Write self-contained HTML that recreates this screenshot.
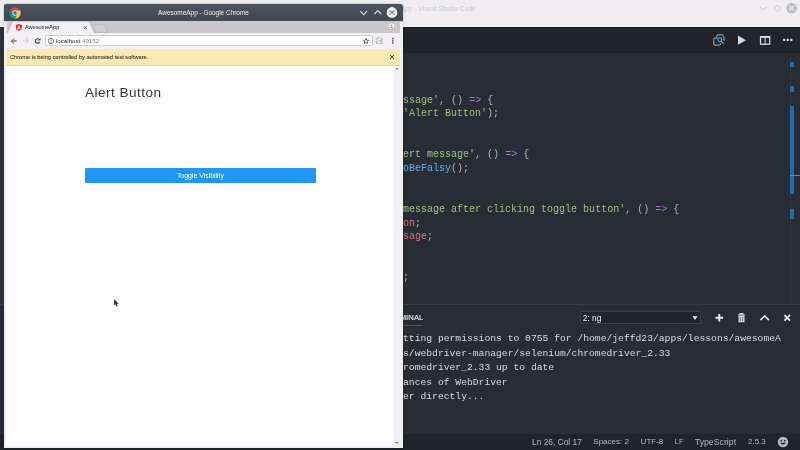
<!DOCTYPE html>
<html>
<head>
<meta charset="utf-8">
<style>
*{margin:0;padding:0;box-sizing:border-box;}
html,body{width:800px;height:450px;overflow:hidden;background:#282c35;font-family:"Liberation Sans",sans-serif;}
.abs{position:absolute;}
#root{position:relative;width:800px;height:450px;overflow:hidden;background:#282c35;will-change:transform;}
/* VS Code */
#vs-title{left:0;top:0;width:800px;height:27.200px;background:#efedf0;border-bottom:1px solid #fbfafc;}
#vs-title .t{left:400.500px;top:5.200px;font-size:6.75px;color:#c9c8cc;white-space:nowrap;}
#vs-tabs{left:0;top:27.200px;width:800px;height:25.400px;background:#21242b;border-top:1px solid #15171b;}
#vs-editor{left:0;top:52.5px;width:800px;height:253px;background:#282c35;}
#vs-left{left:0;top:27px;width:5px;height:407px;background:#2c303b;}
.code{font-family:"Liberation Mono",monospace;font-size:10px;white-space:pre;line-height:13.680px;color:#abb2bf;left:403.100px;}
.g{color:#98c379}.b{color:#61afef}.r{color:#e06c75}.p{color:#a877cf}.w{color:#abb2bf}
#vs-panel{left:0;top:304px;width:800px;height:130px;background:#282c35;border-top:1px solid #353a45;}
.term{font-family:"Liberation Mono",monospace;font-size:9.700px;white-space:pre;line-height:14.500px;color:#d7dae0;left:403px;}
#vs-status{left:0;top:433.8px;width:800px;height:17px;background:#20232a;}
.st{color:#b4b9c3;top:0;height:16px;line-height:16px;white-space:nowrap;}
/* Chrome */
#ch{left:4px;top:4px;width:399px;height:444.3px;background:#f1f0f3;border-radius:2px 3px 0 0;box-shadow:0 0 2px rgba(0,0,0,0.35);}
#ch-title{left:0;top:0;width:399px;height:16.6px;background:linear-gradient(#4d545e,#424851);border-radius:2px 3px 0 0;}
#ch-title .t{left:0;width:399px;text-align:center;top:5.2px;font-size:6.44px;color:#eceef0;}
#ch-blue{left:0;top:16.6px;width:399px;height:1px;background:#a9d4f0;}
#ch-in{left:2.3px;top:17.6px;width:394px;height:424.5px;background:#fdfcfe;overflow:hidden;}
#ch-tabs{left:0;top:0;width:394px;height:12px;background:#c9c7ca;}
#ch-tool{left:0;top:11.4px;width:394px;height:16px;background:#f2f0f3;}
#ch-info{left:0;top:27.2px;width:394px;height:17px;background:#fce8b2;border-bottom:1px solid #d3d4da;}
#ch-info .t{left:3.7px;top:5.1px;-webkit-text-stroke:0.080px #3a3425;font-size:5.66px;color:#3a3425;white-space:nowrap;}
#omni{left:38.600px;top:2.400px;width:328.300px;height:11.100px;background:#fff;border:1px solid #d2d0d4;border-radius:2px;}
</style>
</head>
<body>
<div id="root">
  <!-- VS Code background window -->
  <div id="vs-title" class="abs"><div class="t abs">App - Visual Studio Code</div>
    <svg class="abs" style="left:750px;top:0" width="50" height="18" viewBox="0 0 50 18">
      <path d="M10.100 6.900 L13.400 10.200 L16.700 6.900" fill="none" stroke="#c6c5c9" stroke-width="1"/>
      <path d="M27.500 5.100 L30.800 8.400 L27.500 11.700 L24.200 8.400 Z" fill="none" stroke="#c6c5c9" stroke-width="1"/>
      <circle cx="41.600" cy="8.200" r="5.300" fill="#bfbec2"/>
      <path d="M39.300 5.900 L43.900 10.500 M43.900 5.900 L39.300 10.500" stroke="#efedf0" stroke-width="1.100"/>
    </svg>
  </div>
  <div id="vs-tabs" class="abs">
    <svg class="abs" style="left:710px;top:4.900px" width="85" height="16" viewBox="0 0 85 16">
      <path d="M7.200 5 H4.600 Q3.900 5 3.900 5.700 V11.400 Q3.900 12.100 4.600 12.100 H9.700 Q10.400 12.100 10.400 11.400 V10.200" fill="none" stroke="#b9bdc5" stroke-width="0.950"/>
      <path d="M6.900 4.600 V2.500 Q6.900 1.800 7.600 1.800 H12.200 L14 3.600 V7.600" fill="none" stroke="#b9bdc5" stroke-width="0.950"/>
      <circle cx="9.800" cy="6.800" r="1.900" fill="none" stroke="#5aa7e6" stroke-width="1.100"/>
      <path d="M11.200 8.300 L13.700 10.900" stroke="#5aa7e6" stroke-width="1.300"/>
      <path d="M28 2.600 L36 7.200 L28 11.800 Z" fill="#d6d9de"/>
      <rect x="50.500" y="3.700" width="9.200" height="7.500" fill="none" stroke="#dfe1e6" stroke-width="1.200"/>
      <path d="M50.500 4 H59.700" stroke="#dfe1e6" stroke-width="1.600"/>
      <path d="M55.100 3.700 V11.200" stroke="#dfe1e6" stroke-width="1"/>
      <rect x="73.100" y="5.800" width="2.200" height="2.200" rx="0.600" fill="#e4e6ea"/><rect x="76.700" y="5.800" width="2.200" height="2.200" rx="0.600" fill="#e4e6ea"/><rect x="80.300" y="5.800" width="2.200" height="2.200" rx="0.600" fill="#e4e6ea"/>
    </svg>
  </div>
  <div id="vs-editor" class="abs">
    <div class="abs" style="left:789.800px;top:0;width:1px;height:253px;background:#30353f"></div>
    <div class="abs" style="left:790.200px;top:9.200px;width:3.600px;height:5.300px;background:#1d6cab"></div>
    <div class="abs" style="left:790.200px;top:33.700px;width:3.600px;height:5.400px;background:#1d6cab"></div>
    <div class="abs" style="left:790.200px;top:53.600px;width:3.600px;height:88.300px;background:#1d6cab"></div>
    <div class="abs" style="left:790.200px;top:156.200px;width:3.600px;height:10.200px;background:#1d6cab"></div>
    <div class="abs" style="left:790.200px;top:122px;width:10px;height:1px;background:#5a8db3"></div>
  </div>
  <div id="vs-left" class="abs"></div>
  <div class="abs code" style="top:93.500px"><span class="g">ssage'</span>, () <span class="p">=&gt;</span> {
<span class="g">'Alert Button'</span>);


<span class="g">ert message'</span>, () <span class="p">=&gt;</span> {
<span class="b">oBeFalsy</span>();


<span class="g">message after clicking toggle button'</span>, () <span class="p">=&gt;</span> {
<span class="r">on</span>;
<span class="r">sage</span>;


;</div>
  <div id="vs-panel" class="abs">
    <div class="abs" style="left:399.700px;top:8.300px;font-size:7.600px;color:#e6e8ec;letter-spacing:0.100px;-webkit-text-stroke:0.150px">MINAL</div>
    <div class="abs" style="left:401px;top:19.800px;width:22px;height:1px;background:#4f545e"></div>
    <div class="abs" style="left:579.700px;top:5.600px;width:121.500px;height:13.900px;background:#21242b;border:1px solid #3a3e49"></div>
    <div class="abs" style="left:582.800px;top:8px;font-size:8.400px;color:#eef0f3">2: ng</div>
    <svg class="abs" style="left:691px;top:8.700px" width="8" height="8" viewBox="0 0 8 8"><path d="M1.500 2.200 H6.500 L4 6 Z" fill="#eef0f3"/></svg>
    <svg class="abs" style="left:710px;top:5px" width="85" height="16" viewBox="0 0 85 16">
      <path d="M9.250 4 V11.600 M5.450 7.800 H13.050" stroke="#eef0f3" stroke-width="1.900"/>
      <path d="M27.800 5 H35.200 M30 4.800 V3.600 H33 V4.800" fill="none" stroke="#d7dae0" stroke-width="1.100"/>
      <path d="M28.500 5.800 H34.500 V12.300 H28.500 Z" fill="#d7dae0"/>
      <path d="M30.300 7 V11.200 M32.700 7 V11.200" stroke="#4a4e58" stroke-width="0.700"/>
      <path d="M50.400 10.100 L54.650 5.850 L58.900 10.100" fill="none" stroke="#eef0f3" stroke-width="1.500"/>
      <path d="M74.400 5 L80 10.600 M80 5 L74.400 10.600" stroke="#eef0f3" stroke-width="1.900"/>
    </svg>
  </div>
  <div class="abs term" style="top:332.200px">tting permissions to 0755 for /home/jeffd23/apps/lessons/awesomeA
s/webdriver-manager/selenium/chromedriver_2.33
romedriver_2.33 up to date
ances of WebDriver
er directly...</div>
  <div id="vs-status" class="abs">
    <div class="abs st" style="left:532px;font-size:8.400px">Ln 26, Col 17</div>
    <div class="abs st" style="left:593.300px;font-size:8.030px">Spaces: 2</div>
    <div class="abs st" style="left:640.600px;font-size:8.030px">UTF-8</div>
    <div class="abs st" style="left:674.800px;font-size:7.400px">LF</div>
    <div class="abs st" style="left:694.800px;font-size:8.740px">TypeScript</div>
    <div class="abs st" style="left:748px;font-size:8px">2.5.3</div>
    <svg class="abs" style="left:777.200px;top:2.500px" width="12" height="12" viewBox="0 0 12 12">
      <circle cx="6" cy="6" r="5.200" fill="#b4b9c3"/>
      <circle cx="4.200" cy="4.700" r="0.900" fill="#21242b"/><circle cx="7.800" cy="4.700" r="0.900" fill="#21242b"/>
      <path d="M3 6.700 Q6 10.400 9 6.700 Z" fill="#21242b"/>
    </svg>
  </div>

  <!-- Chrome window -->
  <div id="ch" class="abs">
    <div id="ch-title" class="abs"><div class="t abs">AwesomeApp - Google Chrome</div>
      <svg class="abs" style="left:5px;top:2.900px" width="12" height="12" viewBox="0 0 12 12">
        <path d="M1.210 2.910 A5.700 5.700 0 0 1 11.070 3.400 L6 3.400 A2.600 2.600 0 0 0 3.750 7.300 Z" fill="#db4437"/>
        <path d="M11.070 3.400 A5.700 5.700 0 0 1 5.710 11.690 L8.250 7.300 A2.600 2.600 0 0 0 6 3.400 Z" fill="#f9cb3a"/>
        <path d="M5.710 11.690 A5.700 5.700 0 0 1 1.210 2.910 L3.750 7.300 A2.600 2.600 0 0 0 8.250 7.300 Z" fill="#109d58"/>
        <circle cx="6" cy="6" r="2.700" fill="#f1f1f1"/>
        <circle cx="6" cy="6" r="1.950" fill="#2f7de9"/>
      </svg>
      <svg class="abs" style="left:350px;top:1px" width="48" height="15" viewBox="0 0 48 15">
        <path d="M6.300 6.200 L9.700 9.600 L13.100 6.200" fill="none" stroke="#d4d7dc" stroke-width="1.200"/>
        <path d="M20.400 9 L23.800 5.600 L27.200 9" fill="none" stroke="#d4d7dc" stroke-width="1.200"/>
        <circle cx="38" cy="7.400" r="5.300" fill="#f2f3f5"/>
        <path d="M35.600 5 L40.400 9.800 M40.400 5 L35.600 9.800" stroke="#555a63" stroke-width="1"/>
      </svg>
    </div>
    <div id="ch-blue" class="abs"></div>
    <div id="ch-in" class="abs">
      <div id="ch-tabs" class="abs">
        <svg class="abs" style="left:0;top:0" width="394" height="12" viewBox="0 0 394 12">
          <rect x="0" y="0" width="0.800" height="12" fill="#efedf0"/><path d="M1.400 12 L6.700 0.800 Q7 0.100 7.900 0.100 L81.900 0.100 Q82.800 0.100 83.200 0.800 L88.300 12 Z" fill="#f2f0f3"/>
          <path d="M86.600 2.900 H99 L101.700 10.300 H89.600 Z" fill="#cfcdd0" stroke="#aeacb0" stroke-width="0.550"/>
          <rect x="379.100" y="1.100" width="12.700" height="6.400" rx="0.800" fill="#cdcbce" stroke="#b9b7bb" stroke-width="0.500"/>
          <circle cx="385.600" cy="4.100" r="2.600" fill="#f6f5f7"/>
          <circle cx="385.600" cy="3.300" r="0.850" fill="#8f8d92"/><path d="M383.900 5.900 Q385.600 3.700 387.300 5.900 Z" fill="#8f8d92"/>
          <!-- angular favicon -->
          <path d="M12.900 1.900 L16.100 3 L15.600 7.600 L12.900 9.100 L10.200 7.600 L9.700 3 Z" fill="#dd2c3b"/>
          <path d="M12.900 3.100 L14.800 7.400 H14 L13.600 6.400 H12.200 L11.800 7.400 H11 Z M12.900 4.600 L12.450 5.700 H13.350 Z" fill="#fff"/>
          <path d="M77.900 4.200 L80.900 7.200 M80.900 4.200 L77.900 7.200" stroke="#4a4a4d" stroke-width="0.800"/>
        </svg>
        <div class="abs" style="left:18.600px;top:2.500px;font-size:5.600px;color:#1c1c1e;white-space:nowrap">AwesomeApp</div>
      </div>
      <div id="ch-tool" class="abs">
        <svg class="abs" style="left:0;top:0" width="45" height="16" viewBox="0 0 45 16">
          <path d="M10.700 8 H5.500 M8.100 5.400 L5.400 8.100 L8.100 10.800" fill="none" stroke="#4a4a4d" stroke-width="1"/>
          <path d="M17 8 H22.400 M19.900 5.400 L22.600 8.100 L19.900 10.800" fill="none" stroke="#c9c7cb" stroke-width="1"/>
          <path d="M33.500 6.700 A2.250 2.250 0 1 0 33.700 8.900" fill="none" stroke="#4a4a4d" stroke-width="1.150"/>
          <path d="M34.500 4.900 V7.400 H32 Z" fill="#4a4a4d"/>
        </svg>
        <div id="omni" class="abs">
          <svg class="abs" style="left:1.050px;top:0.300px" width="8" height="8" viewBox="0 0 8 8"><circle cx="4" cy="4" r="2.600" fill="none" stroke="#5a5a5e" stroke-width="0.700"/><path d="M4 3.500 V5.500 M4 2.300 V3" stroke="#5a5a5e" stroke-width="0.800"/></svg>
          <div class="abs" style="left:10.100px;top:0.300px;font-size:6.170px;color:#1f1f21;white-space:nowrap">localhost<span style="color:#8a888d">:49152</span></div>
          <svg class="abs" style="left:315.35px;top:-0.60px" width="10" height="10" viewBox="0 0 10 10"><path d="M5.00 2.45 L5.73 4.19 L7.62 4.35 L6.19 5.59 L6.62 7.42 L5.00 6.45 L3.38 7.42 L3.81 5.59 L2.38 4.35 L4.27 4.19 Z" fill="none" stroke="#454549" stroke-width="0.800" stroke-linejoin="miter"/></svg>
        </div>
        <svg class="abs" style="left:369px;top:4px" width="9" height="8" viewBox="0 0 9 8">
          <rect x="0.700" y="0.600" width="7" height="6.400" rx="0.700" fill="#c4c2c6"/>
          <path d="M5.550 2.700 A1.600 1.650 0 1 0 5.550 4.900" fill="none" stroke="#fbfafc" stroke-width="1.150"/>
        </svg>
        <svg class="abs" style="left:384px;top:3px" width="6" height="10" viewBox="0 0 6 10"><circle cx="2.900" cy="2.700" r="0.850" fill="#505054"/><circle cx="2.900" cy="4.800" r="0.850" fill="#505054"/><circle cx="2.900" cy="6.900" r="0.850" fill="#505054"/></svg>
      </div>
      <div id="ch-info" class="abs"><div class="t abs">Chrome is being controlled by automated test software.</div>
        <svg class="abs" style="left:381.800px;top:4.300px" width="8" height="8" viewBox="0 0 8 8"><path d="M2 2 L6 6 M6 2 L2 6" stroke="#3a3425" stroke-width="0.900"/></svg>
      </div>
      <svg class="abs" style="left:40px;top:22px" width="10" height="6" viewBox="0 0 10 6"><path d="M0.900 5.400 L4.550 1.500 L8.200 5.400 Z" fill="#fce8b2"/></svg>
      <!-- page -->
      <div class="abs" style="left:78.700px;top:63.500px;font-size:13.600px;letter-spacing:0.450px;color:#36363b;white-space:nowrap">Alert Button</div>
      <div class="abs" style="left:79px;top:146.700px;width:230.300px;height:15px;background:#2196f3;border-radius:1.200px;color:#fff;font-size:6.920px;text-align:center;line-height:16.300px">Toggle Visibility</div>
      <!-- scrollbar -->
      <div class="abs" style="left:388px;top:44.200px;width:6.500px;height:382px;background:#f2f1f3"></div>
      <svg class="abs" style="left:388px;top:44px" width="6" height="6" viewBox="0 0 6 6"><path d="M1.100 3.600 L2.900 1.500 L4.700 3.600 Z" fill="#7b797e"/></svg>
      <svg class="abs" style="left:388px;top:418px" width="6" height="6" viewBox="0 0 6 6"><path d="M1.100 1.900 L2.900 4 L4.700 1.900 Z" fill="#7b797e"/></svg>
    </div>
  </div>
  <!-- cursor -->
  <svg class="abs" style="left:110px;top:296px" width="12" height="13" viewBox="0 0 12 13"><path d="M4 3 L4 9.400 L5.400 8.300 L6.400 10.600 L7.700 10.100 L6.800 8 L8.700 7.700 Z" fill="#3a3a3f"/></svg>
</div>
</body>
</html>
